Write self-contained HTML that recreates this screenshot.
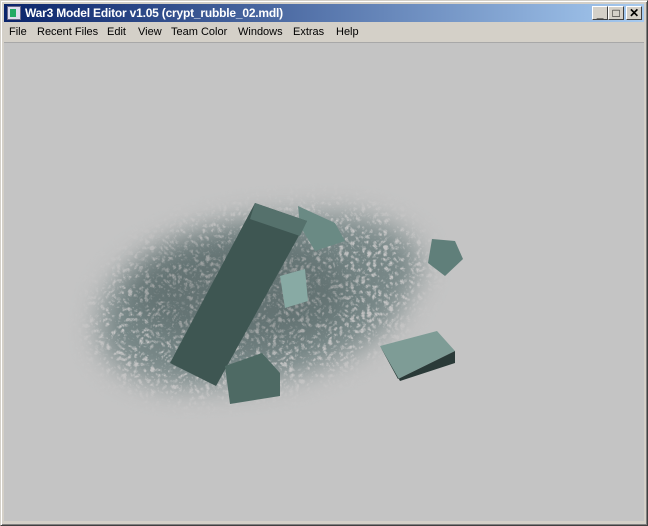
<!DOCTYPE html>
<html><head><style>
*{margin:0;padding:0;box-sizing:border-box}
body{width:648px;height:526px;background:#d4d0c8;position:relative;overflow:hidden;font-family:"Liberation Sans",sans-serif}
.frame{position:absolute;left:0;top:0;width:648px;height:526px;border:1px solid;border-color:#d4d0c8 #404040 #404040 #d4d0c8;box-shadow:inset 1px 1px #fff,inset -1px -1px #808080}
.title{position:absolute;left:4px;top:4px;width:640px;height:18px;background:linear-gradient(to right,#0a246a,#a6caf0);color:#fff;font-weight:bold;font-size:12px;line-height:18px;padding-left:21px;letter-spacing:-0.2px}
.ico{position:absolute;left:3px;top:2px;width:14px;height:14px;background:#dde;border:1px solid #668}
.ico:after{content:"";position:absolute;left:2px;top:2px;width:6px;height:8px;background:#2a6}
.btn{position:absolute;top:2px;width:16px;height:14px;background:#d4d0c8;border:1px solid;border-color:#fff #404040 #404040 #fff;color:#000;font-size:12px;font-weight:bold;line-height:12px;text-align:center}
.menu span{position:absolute;top:23px;font-size:11px;line-height:18px;color:#000}
.view{position:absolute;left:4px;top:42px;width:640px;height:478px;background:#c4c4c4;border-top:1px solid #a8a8a8}
</style></head><body>
<div class="frame"></div>
<div class="title"><div class="ico"></div>War3 Model Editor v1.05 (crypt_rubble_02.mdl)
<div class="btn" style="left:588px">_</div><div class="btn" style="left:604px">□</div><div class="btn" style="left:622px">✕</div></div>
<div class="menu"><span style="left:9px">File</span><span style="left:37px">Recent Files</span><span style="left:107px">Edit</span><span style="left:138px">View</span><span style="left:171px">Team Color</span><span style="left:238px">Windows</span><span style="left:293px">Extras</span><span style="left:336px">Help</span></div>
<div class="view">
<svg width="640" height="478" viewBox="4 42 640 478">
<defs><filter id="b" x="-30%" y="-30%" width="160%" height="160%"><feGaussianBlur stdDeviation="14"/></filter>
<filter id="n"><feTurbulence baseFrequency="0.18" numOctaves="3" seed="3"/><feColorMatrix values="0 0 0 0 0.18 0 0 0 0 0.24 0 0 0 0 0.24 0 0 0 -3 1.9"/></filter>
<mask id="m"><g filter="url(#b)" fill="#fff"><ellipse cx="255" cy="300" rx="155" ry="80" transform="rotate(-10 255 300)"/><ellipse cx="190" cy="330" rx="90" ry="55"/><ellipse cx="330" cy="265" rx="90" ry="50"/></g></mask></defs>
<rect x="4" y="42" width="640" height="478" fill="#c4c4c4"/>
<rect x="80" y="180" width="380" height="260" filter="url(#n)" mask="url(#m)"/>
<g filter="url(#b)" opacity="0.3"><ellipse cx="240" cy="290" rx="110" ry="55" fill="#3a4a4a"/></g>
<polygon points="298,205 335,222 345,240 315,250 300,225" fill="#6a8a84"/>
<polygon points="255,202 307,220 216,385 170,362" fill="#3e5652"/>
<polygon points="255,202 307,220 300,235 250,218" fill="#55716c"/>
<polygon points="280,275 305,268 308,300 285,307" fill="#88aaa4"/>
<polygon points="225,365 262,352 280,372 280,395 230,403" fill="#4e6a64"/>
<polygon points="432,238 455,240 463,258 445,275 428,262" fill="#607f7a"/>
<polygon points="380,345 437,330 455,350 398,378" fill="#7e9c96"/>
<polygon points="380,345 398,378 455,350 455,362 400,380" fill="#2a3a38"/>
</svg></div>
</body></html>
